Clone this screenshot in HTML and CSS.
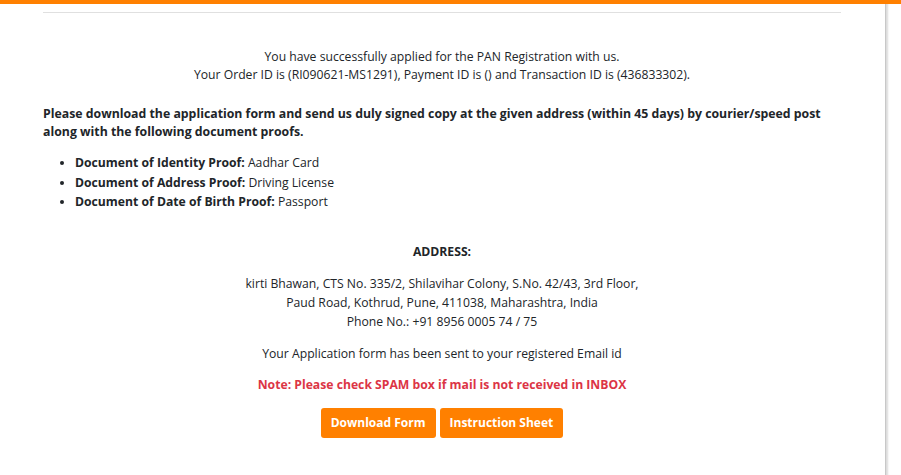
FILE: index.html
```html
<!DOCTYPE html>
<html lang="en">
<head>
<meta charset="utf-8">
<title>PAN Registration</title>
<link rel="stylesheet" href="styles.css">
</head>
<body>
<div class="topbar"></div>
<div class="page">
  <main class="content">
    <hr class="rule">
    <p class="center intro">You have successfully applied for the PAN Registration with us.<br>Your Order ID is (RI090621-MS1291), Payment ID is () and Transaction ID is (436833302).</p>
    <p class="strong-para">Please download the application form and send us duly signed copy at the given address (within 45 days) by courier/speed post along with the following document proofs.</p>
    <ul class="docs">
      <li><b>Document of Identity Proof:</b> Aadhar Card</li>
      <li><b>Document of Address Proof:</b> Driving License</li>
      <li><b>Document of Date of Birth Proof:</b> Passport</li>
    </ul>
    <h4 class="center addr-title">ADDRESS:</h4>
    <p class="center addr">kirti Bhawan, CTS No. 335/2, Shilavihar Colony, S.No. 42/43, 3rd Floor,<br>Paud Road, Kothrud, Pune, 411038, Maharashtra, India<br>Phone No.: +91 8956 0005 74 / 75</p>
    <p class="center mail">Your Application form has been sent to your registered Email id</p>
    <p class="center note">Note: Please check SPAM box if mail is not received in INBOX</p>
    <div class="buttons"><a class="btn" href="#">Download Form</a><a class="btn" href="#">Instruction Sheet</a></div>
    <p class="center tail">Kindly download the application form and the instruction sheet for further details.</p>
  </main>
  <div class="scrollbar"></div>
</div>
</body>
</html>
```
FILE: styles.css
```css
html, body {
  margin: 0;
  padding: 0;
  height: 100%;
  overflow: hidden;
  background: #fff;
}
body {
  font-family: "Open Sans", "Noto Sans", "Liberation Sans", sans-serif;
  font-size: 12.2px;
  color: #212529;
}
.topbar {
  height: 4px;
  background: #ff8000;
}
.page {
  display: flex;
  height: calc(100% - 4px);
}
.content {
  flex: 1;
  padding: 0 44px 0 43px;
  overflow: hidden;
}
.scrollbar {
  width: 15px;
  background: #fff;
  border-left: 1px solid #c8c8c8;
  box-shadow: inset 3px 0 2px -1px #dcdcdc;
}
.rule {
  margin: 8px 0 0;
  border: 0;
  border-top: 1px solid #e0e0e0;
}
.center { text-align: center; }
p { margin: 0; }
.intro {
  margin-top: 35px;
  line-height: 18px;
}
.strong-para {
  margin-top: 21px;
  font-size: 12.3px;
  font-weight: 700;
  line-height: 18px;
}
.docs {
  margin: 12px 0 0;
  padding-left: 32px;
  line-height: 19.5px;
}
.docs li b { font-weight: 700; }
.addr-title {
  margin: 30px 0 0;
  font-size: 12.2px;
  font-weight: 700;
  line-height: 20px;
}
.addr {
  margin-top: 12px;
  line-height: 19px;
}
.mail {
  margin-top: 13px;
  line-height: 19px;
}
.note {
  margin-top: 12px;
  color: #dc3545;
  font-weight: 700;
  line-height: 19px;
}
.buttons {
  margin-top: 14px;
  display: flex;
  justify-content: center;
  gap: 4px;
}
.btn {
  display: block;
  padding: 0 10px;
  height: 30px;
  line-height: 30px;
  font-size: 12px;
  font-weight: 700;
  color: #fff;
  background: #ff8000;
  border-radius: 3px;
  text-decoration: none;
}
.tail {
  margin-top: 34px;
  line-height: 19px;
}
```
